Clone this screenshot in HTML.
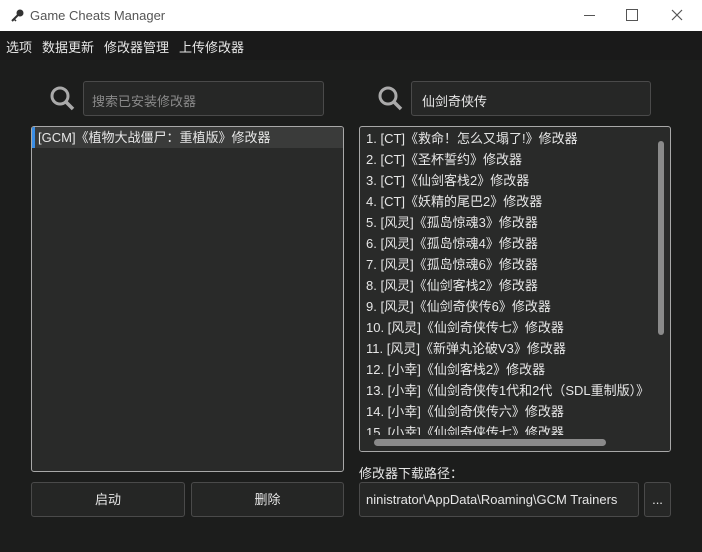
<!DOCTYPE html><html><head><meta charset="utf-8"><style>
body{margin:0;width:702px;height:552px;overflow:hidden;background:#1c1d1c;font-family:"Liberation Sans","Noto Sans CJK SC",sans-serif;color:#e6e6e6;font-size:13px;position:relative}
.a{position:absolute}
.title{left:0;top:0;width:702px;height:31px;background:#fff;color:#555;font-size:13px}
.menu{left:0;top:31px;width:702px;height:29px;background:#1a1a1a}
.inp{border:1px solid #4a4a4a;border-radius:3px;background:#262726;box-sizing:border-box}
.list{border:1px solid #a8a8a8;border-radius:3px;background:#292a29;box-sizing:border-box;overflow:hidden}
.btn{border:1px solid #4a4a4a;border-radius:3px;background:#252625;box-sizing:border-box;text-align:center;line-height:33px}
.row{height:21px;line-height:21px;padding-left:6px;white-space:nowrap}
</style></head><body>
<div class="a title"><svg class="a" style="left:10px;top:9px" width="14" height="14"><circle cx="10" cy="4" r="3.5" fill="#333"/><line x1="8" y1="6" x2="2" y2="12" stroke="#333" stroke-width="2"/><line x1="4" y1="10" x2="6" y2="12" stroke="#333" stroke-width="1.5"/></svg><span class="a" style="left:30px;top:8px">Game Cheats Manager</span>
<span class="a" style="left:584px;top:15px;width:11px;height:1px;background:#555"></span><span class="a" style="left:626px;top:9px;width:10px;height:10px;border:1px solid #555"></span>
<svg class="a" style="left:671px;top:9px" width="12" height="12"><path d="M1 1L11 11M11 1L1 11" stroke="#555" stroke-width="1.2"/></svg></div>
<div class="a menu"><div class="a" style="left:6px;top:6px;word-spacing:0">选项<span style="margin-left:10px">数据更新</span><span style="margin-left:10px">修改器管理</span><span style="margin-left:10px">上传修改器</span></div></div>
<svg class="a" style="left:50px;top:86px" width="26" height="26"><circle cx="10" cy="10" r="8" fill="none" stroke="#aaa" stroke-width="3"/><line x1="16" y1="16" x2="23" y2="23" stroke="#aaa" stroke-width="3.5"/></svg>
<div class="a inp" style="left:83px;top:81px;width:241px;height:35px;color:#8a8a8a;padding:9px 8px">搜索已安装修改器</div>
<svg class="a" style="left:378px;top:86px" width="26" height="26"><circle cx="10" cy="10" r="8" fill="none" stroke="#aaa" stroke-width="3"/><line x1="16" y1="16" x2="23" y2="23" stroke="#aaa" stroke-width="3.5"/></svg>
<div class="a inp" style="left:411px;top:81px;width:240px;height:35px;padding:9px 10px">仙剑奇侠传</div>
<div class="a list" style="left:31px;top:126px;width:313px;height:346px"><div class="row" style="background:#3a3b3a;border-left:3px solid #3a8ee6;padding-left:3px">[GCM]《植物大战僵尸：重植版》修改器</div></div>
<div class="a list" style="left:359px;top:126px;width:312px;height:326px;padding-top:1px">
<div class="row">1. [CT]《救命！怎么又塌了!》修改器</div><div class="row">2. [CT]《圣杯誓约》修改器</div><div class="row">3. [CT]《仙剑客栈2》修改器</div><div class="row">4. [CT]《妖精的尾巴2》修改器</div><div class="row">5. [风灵]《孤岛惊魂3》修改器</div><div class="row">6. [风灵]《孤岛惊魂4》修改器</div><div class="row">7. [风灵]《孤岛惊魂6》修改器</div><div class="row">8. [风灵]《仙剑客栈2》修改器</div><div class="row">9. [风灵]《仙剑奇侠传6》修改器</div><div class="row">10. [风灵]《仙剑奇侠传七》修改器</div><div class="row">11. [风灵]《新弹丸论破V3》修改器</div><div class="row">12. [小幸]《仙剑客栈2》修改器</div><div class="row">13. [小幸]《仙剑奇侠传1代和2代（SDL重制版）》</div><div class="row">14. [小幸]《仙剑奇侠传六》修改器</div><div class="row">15. [小幸]《仙剑奇侠传七》修改器</div>
<div class="a" style="left:0;top:308px;width:310px;height:16px;background:#292a29"></div>
<div class="a" style="left:14px;top:312px;width:232px;height:7px;background:#8a8a8a;border-radius:4px"></div>
<div class="a" style="left:298px;top:14px;width:6px;height:194px;background:#8a8a8a;border-radius:3px"></div>
</div>
<div class="a" style="left:359px;top:463px">修改器下载路径：</div>
<div class="a inp" style="left:359px;top:482px;width:280px;height:35px;padding:9px 6px;white-space:nowrap;overflow:hidden">ninistrator\AppData\Roaming\GCM Trainers</div>
<div class="a inp" style="left:644px;top:482px;width:27px;height:35px;text-align:center;line-height:33px">...</div>
<div class="a btn" style="left:31px;top:482px;width:154px;height:35px">启动</div>
<div class="a btn" style="left:191px;top:482px;width:153px;height:35px">删除</div>
</body></html>
